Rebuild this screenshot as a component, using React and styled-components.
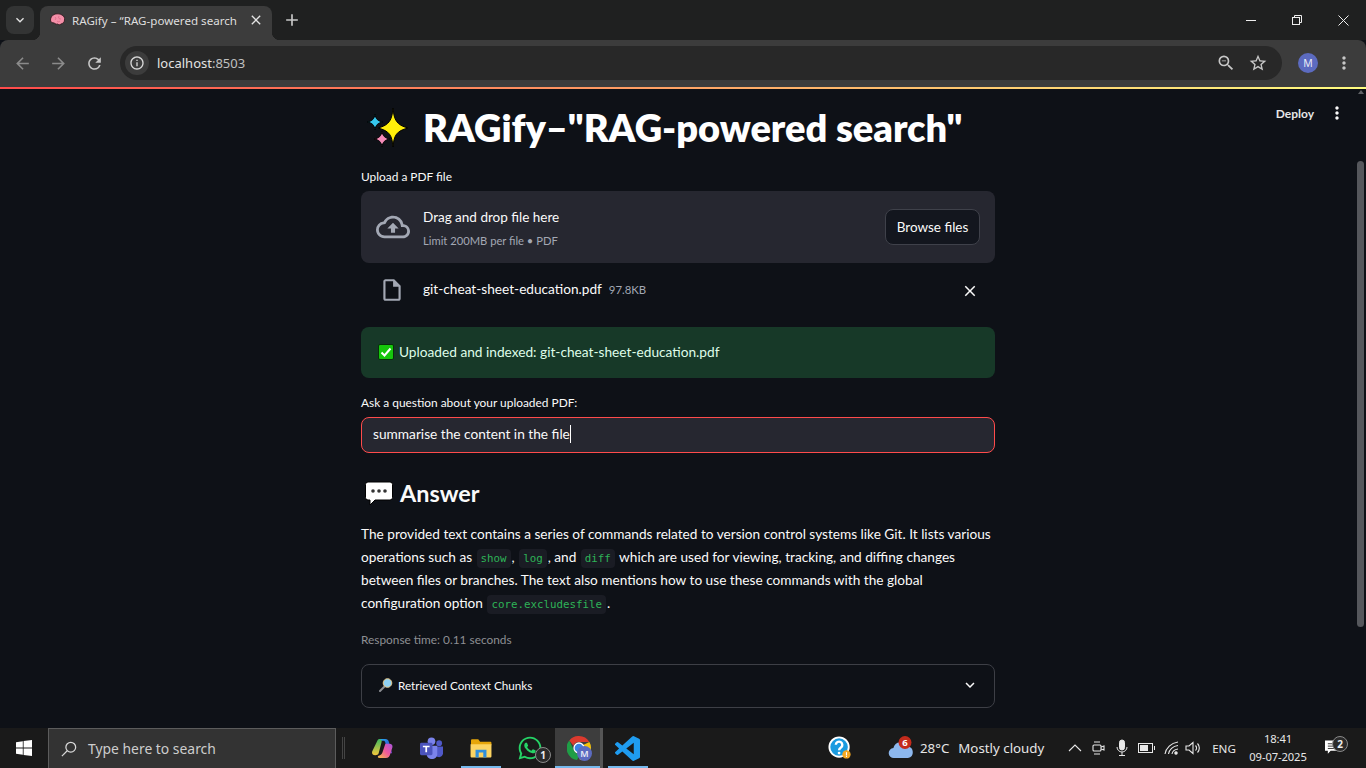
import React from "react";
import styled, { createGlobalStyle } from "styled-components";
import { MdOutlineCloudUpload, MdOutlineInsertDriveFile, MdClose, MdKeyboardArrowDown, MdMoreVert, MdArrowBack, MdArrowForward, MdRefresh, MdInfoOutline, MdAdd, MdStarBorder, MdOutlineZoomOut } from "react-icons/md";
import { FaWhatsapp } from "react-icons/fa";

const Global = createGlobalStyle`
  html, body { margin: 0; padding: 0; height: 100%; overflow: hidden; background: #0e1117; }
  * { box-sizing: border-box; }
`;
const ui = `"Noto Sans", "Open Sans", sans-serif`;
const st = `Lato, "Noto Sans", sans-serif`;
const mono = `"DejaVu Sans Mono", "Liberation Mono", monospace`;

const Screen = styled.div`display:flex;flex-direction:column;width:1366px;height:768px;overflow:hidden;background:#0e1117;`;

/* browser chrome */
const TabBar = styled.div`display:flex;align-items:flex-end;height:40px;background:#1f2020;padding-left:6px;flex:none;`;
const TabList = styled.div`width:28px;height:28px;margin-bottom:6px;border-radius:8px;background:#333434;color:#e3e3e3;display:flex;align-items:center;justify-content:center;font-size:16px;`;
const Tab = styled.div`
  position:relative;display:flex;align-items:center;width:232px;height:34px;margin-left:6px;padding:0 8px 6px 10px;
  background:#3c3c3c;border-radius:8px 8px 0 0;color:#dedede;font:11.6px ${ui};
  &::after{content:"";position:absolute;right:-8px;bottom:0;width:8px;height:8px;background:radial-gradient(circle at 100% 0,transparent 8px,#3c3c3c 8.5px);}
  &::before{content:"";position:absolute;left:-8px;bottom:0;width:8px;height:8px;background:radial-gradient(circle at 0 0,transparent 8px,#3c3c3c 8.5px);}
`;
const TabTitle = styled.span`flex:1;margin-left:7px;white-space:nowrap;`;
const NewTab = styled.div`width:24px;height:24px;margin:0 0 8px 8px;color:#c7c7c7;font-size:20px;display:flex;align-items:center;justify-content:center;`;
const WindowControls = styled.div`margin-left:auto;display:flex;height:40px;`;
const WinBtn = styled.div`width:46px;height:40px;display:flex;align-items:center;justify-content:center;`;

const ToolBar = styled.div`display:flex;align-items:center;height:47px;background:#3c3c3c;border-radius:8px 8px 0 0;flex:none;padding:0 0 1px 4px;`;
const NavBtn = styled.div`width:36px;height:34px;display:flex;align-items:center;justify-content:center;font-size:19px;color:${p=>p.$off?"#8b8b8b":"#c7c7c7"};`;
const Omnibox = styled.div`display:flex;align-items:center;width:1162px;height:34px;margin-left:8px;padding:0 8px 0 5px;border-radius:17px;background:#282828;`;
const SiteInfo = styled.div`width:24px;height:24px;border-radius:12px;background:#3c3c3c;color:#d8d8d8;display:flex;align-items:center;justify-content:center;font-size:16px;`;
const Url = styled.div`margin-left:8px;font:13px ${ui};color:#e3e3e3;flex:1;span{color:#c0c0c0;}`;
const OmniIcon = styled.div`width:32px;display:flex;justify-content:center;color:#c7c7c7;font-size:20px;`;
const Avatar = styled.div`width:20px;height:20px;border-radius:50%;background:#5c6bc0;color:#e8eaf6;font:10.5px ${ui};display:flex;align-items:center;justify-content:center;margin-left:16px;`;
const Kebab = styled.div`margin-left:16px;color:#c7c7c7;font-size:20px;display:flex;`;
const Decoration = styled.div`height:2px;flex:none;background:linear-gradient(90deg,#ff4b4b,#fffd80);`;

/* streamlit page */
const Page = styled.div`position:relative;flex:1;display:flex;min-height:0;overflow:hidden;font-family:${st};color:#fafafa;`;
const Content = styled.div`flex:1;display:flex;justify-content:center;`;
const Column = styled.main`width:634px;display:flex;flex-direction:column;padding-top:14px;`;
const Scrollbar = styled.div`width:10px;flex:none;padding:72px 2px 0 1px;position:relative;`;
const Thumb = styled.div`height:466px;background:#55575c;border-radius:4px;`;
const ScrollUp = styled.div`position:absolute;top:1px;left:2px;border:3px solid transparent;border-bottom:4px solid #5f6165;border-top:0;`;
const Header = styled.div`position:absolute;top:14px;right:19px;display:flex;align-items:center;gap:13px;font:700 12px ${st};color:#e6e6e6;`;
const Dots = styled.div`display:flex;font-size:20px;color:#fafafa;`;

const Title = styled.h1`margin:0;display:flex;align-items:center;height:50px;padding:0 0 0 4px;font:800 38px/48px ${st};color:#fff;white-space:nowrap;`;
const TitleText = styled.span`margin:0 0 2px 12px;letter-spacing:-.04px;`;
const Label = styled.div`margin-top:${p=>p.$mt}px;font:11.9px/16px ${st};color:#fafafa;`;
const Dropzone = styled.div`display:flex;align-items:center;height:72px;margin-top:6px;padding:0 15px;border-radius:8px;background:#262730;`;
const DropIcon = styled.div`display:flex;color:#a3a8b4;font-size:34px;width:47px;`;
const DropText = styled.div`flex:1;display:flex;flex-direction:column;gap:7px;padding-top:2px;`;
const DropTitle = styled.div`font:13.5px/18px ${st};color:#fafafa;`;
const DropSub = styled.div`font:11.2px/16px ${st};color:#a3a8b4;`;
const BrowseBtn = styled.button`width:95px;height:36px;background:#13161e;border:1px solid #3f414a;border-radius:8px;color:#fafafa;font:13.5px ${st};padding:0;`;
const FileRow = styled.div`display:flex;align-items:center;height:52px;padding:0 16px 0 18px;margin-bottom:12px;`;
const FileIcon = styled.div`display:flex;color:#a3a8b4;font-size:26px;width:44px;margin-top:2px;`;
const FileName = styled.span`font:13.65px ${st};color:#fafafa;`;
const FileSize = styled.span`font:11.4px ${st};color:#a3a8b4;margin-left:7px;`;
const Remove = styled.div`margin-left:auto;display:flex;font-size:18px;color:#fafafa;margin-top:3px;`;
const Alert = styled.div`display:flex;align-items:center;gap:5px;height:51px;padding:0 0 2px 17px;border-radius:8px;background:#173928;color:#dffde9;font:13.7px ${st};`;
const Field = styled.div`display:flex;align-items:center;height:36px;margin-top:6px;padding:0 0 3px 11px;border:1px solid #ff4b4b;border-radius:8px;background:#262730;font:13.7px ${st};color:#fafafa;`;
const Caret = styled.span`display:inline-block;width:1px;height:18px;background:#fff;`;
const H3 = styled.h3`margin:21px 0 0;display:flex;align-items:center;gap:7px;height:38px;padding-left:4px;font:700 23.400px/38px ${st};color:#fafafa;`;
const Body = styled.p`margin:11px 0 0;font:13.65px/23px ${st};color:#fafafa;white-space:nowrap;`;
const Code = styled.code`font:10.8px ${mono};color:#2eb357;background:#1a1c24;border-radius:4px;padding:3px 4px;margin:0 1px;`;
const Caption = styled.div`margin-top:17px;font:11.85px/16px ${st};color:#8d8f93;`;
const Expander = styled.div`display:flex;align-items:center;height:44px;margin-top:16px;padding:0 15px 2px 17px;border:1px solid #3d3f46;border-radius:8px;font:11.700px ${st};color:#fafafa;gap:5px;`;
const Chevron = styled.div`margin-left:auto;display:flex;font-size:18px;`;

/* taskbar */
const Taskbar = styled.div`display:flex;align-items:stretch;height:40px;flex:none;background:#1a1a1a;font-family:${ui};color:#e8e8e8;`;
const Start = styled.div`width:48px;display:flex;align-items:center;justify-content:center;`;
const Search = styled.div`width:288px;display:flex;align-items:center;padding-left:12px;gap:11px;background:#333;border:1px solid #5c5c5c;border-bottom:0;font-size:13.900px;color:#cdcdcd;`;
const Grip = styled.div`width:3px;height:22px;margin:9px 13px 0 6px;border-left:1px solid #444;border-right:1px solid #444;`;
const Slot = styled.div`
  position:relative;width:${p=>p.$w||49}px;display:flex;align-items:center;justify-content:center;
  background:${p=>p.$active?"linear-gradient(90deg,transparent 1px,#3d3d3d 1px,#3d3d3d 46px,#555 46px)":"transparent"};
  &::after{content:"";position:absolute;left:${p=>p.$active?1:5}px;right:${p=>p.$active?3:4}px;bottom:0;height:2px;background:${p=>p.$line?"#76b9ed":"transparent"};}
`;
const Count = styled.span`
  position:absolute;right:${p=>p.$r}px;bottom:${p=>p.$b}px;width:16px;height:16px;border-radius:50%;
  background:#2a2a2a;border:1px solid #8a8a8a;color:#ededed;font:700 10px/14px ${ui};text-align:center;
`;
const ProfileBadge = styled.span`
  position:absolute;right:11px;bottom:7px;width:15px;height:15px;border-radius:50%;
  background:#5c6bc0;color:#e8eaf6;font:600 9px/15px ${ui};text-align:center;
`;
const Tray = styled.div`display:flex;align-items:center;margin-left:164px;`;
const Weather = styled.div`display:flex;align-items:center;font-size:13.300px;color:#e6e6e6;width:198px;padding-left:24px;gap:6px;white-space:nowrap;`;
const Cond = styled.span`margin-left:3px;`;
const TrayIcon = styled.div`width:${p=>p.$w}px;display:flex;justify-content:center;color:#e8e8e8;`;
const Lang = styled.div`width:40px;margin-left:2px;text-align:center;font-size:11.600px;color:#e8e8e8;`;
const Clock = styled.div`width:68px;text-align:center;font-size:11.200px;line-height:18px;color:#e8e8e8;letter-spacing:-.1px;`;
const Notif = styled.div`position:relative;width:32px;margin-left:5px;display:flex;justify-content:center;`;

const Sparkles = () => (
  <svg width="46" height="46" viewBox="0 0 46 46">
    <g stroke="#000" strokeWidth="1" strokeLinejoin="round">
      <path fill="#ffef0a" d="M28 3 C29 15 31.500 20 43 23 C31.500 26 29 30 28 42 C27 30 24.500 26 13 23 C24.500 20 27 15 28 3Z"/>
      <path fill="#35c8ee" d="M10 9 C10.800 14 12.500 16 18 17 C12.500 18 10.800 20 10 25 C9.200 20 7.500 18 2 17 C7.500 16 9.200 14 10 9Z"/>
      <path fill="#f48cb8" d="M17 26 C17.800 31 19.500 33 25 34 C19.500 35 17.800 37 17 42 C16.200 37 14.500 35 9 34 C14.500 33 16.200 31 17 26Z"/>
    </g>
  </svg>
);
const Brain = () => (
  <svg width="15" height="15" viewBox="0 0 15 15">
    <path fill="#f48fa8" stroke="#2a1216" strokeWidth=".8" d="M.5 7c0-3 2-4.500 3.500-5.500 2-1 6-1 8 .5 2 1 3 3 2.500 5 0 2-1.500 3.500-3.500 4-1 1-2.500 1-3 0-2 .5-3-.2-3.500-1C2 10 .5 9 .5 7z"/>
    <path fill="none" stroke="#d9627f" strokeWidth=".7" d="M5 4c1 1 1 2 0 3M9 3c-1 2 0 3 2 3M7 8c1 1 2 1 3 0"/>
  </svg>
);
const Check = () => (
  <svg width="16" height="16" viewBox="0 0 16 16">
    <rect x=".5" y=".5" width="15" height="15" rx="1.500" fill="#16c60c" stroke="#07310a"/>
    <path d="M3.500 8.500 6.500 11.500 12.500 4.500" fill="none" stroke="#fff" strokeWidth="2"/>
  </svg>
);
const Bubble = () => (
  <svg width="28" height="25" viewBox="0 0 28 25">
    <path fill="#fff" stroke="#000" d="M3 1h22a2.500 2.500 0 0 1 2.500 2.500v13a2.500 2.500 0 0 1-2.500 2.500H10l-5 5v-5H3A2.500 2.500 0 0 1 .5 16.500v-13A2.500 2.500 0 0 1 3 1z"/>
    <circle cx="8" cy="10" r="1.800" fill="#333"/><circle cx="14" cy="10" r="1.800" fill="#333"/><circle cx="20" cy="10" r="1.800" fill="#333"/>
  </svg>
);
const Magnifier = () => (
  <svg width="14" height="14" viewBox="0 0 14 14">
    <path d="M1 13 6 8" stroke="#8b8d92" strokeWidth="2" strokeLinecap="round"/>
    <circle cx="8.500" cy="5" r="4.300" fill="#8fd0f2" stroke="#e8c98c" strokeWidth="1"/>
  </svg>
);
const WinLogo = () => (
  <svg width="16" height="16" viewBox="0 0 16 16"><path fill="#fff" d="M0 2.200 6.800 1.200v6.300H0zM7.600 1.100 16 0v7.500H7.600zM0 8.400h6.800v6.400L0 13.800zM7.600 8.400H16V16l-8.400-1.100z"/></svg>
);
const SearchGlass = () => (
  <svg width="16" height="16" viewBox="0 0 18 18" fill="none" stroke="#d8d8d8" strokeWidth="1.400"><circle cx="11" cy="7" r="5.500"/><path d="M7 11 1 17"/></svg>
);
const Copilot = () => (
  <svg width="23" height="23" viewBox="0 0 24 24">
    <defs>
      <linearGradient id="cpA" x1="0" y1="0" x2="1" y2="1"><stop offset="0" stopColor="#27b4f0"/><stop offset=".55" stopColor="#2b62d9"/><stop offset="1" stopColor="#7b3fc8"/></linearGradient>
      <linearGradient id="cpB" x1="0" y1="1" x2="1" y2="0"><stop offset="0" stopColor="#f6c445"/><stop offset=".5" stopColor="#f0589a"/><stop offset="1" stopColor="#a855e0"/></linearGradient>
      <linearGradient id="cpC" x1="0" y1="0" x2="0" y2="1"><stop offset="0" stopColor="#3fb95d"/><stop offset="1" stopColor="#f4c73c"/></linearGradient>
    </defs>
    <path fill="url(#cpA)" d="M8 2h7c2 0 3 1 3.600 3L22 17h-4L15 6c-.4-1.300-1-2-2-2H9z"/>
    <path fill="url(#cpC)" d="M7 3c1-1 2-1 3-.5 1 .5 1.500 1.500 1 3L8 17c-.5 1.500-2 2-3.500 2-2.500 0-4-1.500-3.300-4z"/>
    <path fill="url(#cpB)" d="M15 7h4c2.500 0 4 1.500 3.300 4l-2.300 7c-.6 2-1.800 4-4.500 4H9c-2 0-2.500-2-1-2.500 2-.5 3.500-1.500 4-3.500z"/>
  </svg>
);
const Teams = () => (
  <svg width="25" height="23" viewBox="0 0 26 24">
    <circle cx="13" cy="4.500" r="4" fill="#7b83eb"/><circle cx="21" cy="6.500" r="3" fill="#5059c9"/>
    <path fill="#5059c9" d="M17 10h8v7c0 2.500-2 4-4 4-1.500 0-3-.6-4-2z"/>
    <path fill="#7b83eb" d="M8 9h11v9c0 3-2.500 5-5.500 5S8 21 8 18z"/>
    <rect x="1" y="6" width="13" height="13" rx="1.500" fill="#4b53bc"/>
    <path fill="#fff" d="M4 9h7v1.800H8.400V16H6.600v-5.200H4z"/>
  </svg>
);
const Folder = () => (
  <svg width="22" height="20" viewBox="0 0 24 22">
    <path fill="#e5a50a" d="M1 3c0-1 .5-1.500 1.500-1.500H9L11 4h11c1 0 1.500.5 1.500 1.500V8H1z"/>
    <path fill="#fcd462" d="M.5 7h23v13c0 1-.5 1.500-1.500 1.500H2C1 21.500.5 21 .5 20z"/>
    <path fill="#2f8fdc" d="M6 13h12v8.500h-3.500V16h-5v5.500H6z"/>
  </svg>
);
const Chrome = () => (
  <svg width="24" height="24" viewBox="0 0 24 24">
    <path fill="#db3a2e" d="M12 0a12 12 0 0 1 10.400 6H12a6 6 0 0 0-5.600 3.700L2.300 4.500A12 12 0 0 1 12 0z"/>
    <path fill="#f4c20d" d="M22.400 6A12 12 0 0 1 12.500 24l4.700-9a6 6 0 0 0-1-6z"/>
    <path fill="#1f9d46" d="M2.300 4.500 6.800 14a6 6 0 0 0 6.500 3.800L10 24A12 12 0 0 1 2.300 4.500z"/>
    <circle cx="12" cy="12" r="5" fill="#3b82e6" stroke="#fff" strokeWidth="1.300"/>
  </svg>
);
const VSCode = () => (
  <svg width="25" height="25" viewBox="0 0 24 24"><path fill="#1f9cf0" d="M23.150 2.587L18.210.21a1.494 1.494 0 0 0-1.705.29l-9.460 8.630-4.120-3.128a.999.999 0 0 0-1.276.057L.327 7.261A1 1 0 0 0 .326 8.740L3.899 12 .326 15.260a1 1 0 0 0 .001 1.479L1.650 17.940a.999.999 0 0 0 1.276.057l4.120-3.128 9.460 8.630a1.492 1.492 0 0 0 1.704.29l4.942-2.377A1.500 1.500 0 0 0 24 20.060V3.939a1.500 1.500 0 0 0-.85-1.352zm-5.146 14.861L10.826 12l7.178-5.448v10.896z"/></svg>
);
const HelpIcon = () => (
  <svg width="24" height="24" viewBox="0 0 26 26">
    <circle cx="12" cy="12" r="10.500" fill="#1a9be0" stroke="#fff" strokeWidth="2"/>
    <path d="M8.500 9.500a3.500 3.500 0 1 1 5.500 3c-1.300.9-2 1.400-2 3" fill="none" stroke="#fff" strokeWidth="2.600"/>
    <circle cx="12" cy="18.500" r="1.500" fill="#fff"/>
    <circle cx="20" cy="20" r="4.500" fill="#f6a821"/><rect x="19.400" y="17.500" width="1.200" height="3.500" fill="#fff"/><rect x="19.400" y="21.500" width="1.200" height="1.200" fill="#fff"/>
  </svg>
);
const Cloud = () => (
  <svg width="26" height="24" viewBox="0 0 26 24">
    <path fill="#8db8ee" d="M6 22a5 5 0 0 1-.6-10 7.500 7.500 0 0 1 14-1.500A5.800 5.800 0 0 1 20 22z"/>
    <circle cx="17" cy="6.500" r="6.500" fill="#c42b1c"/>
    <text x="17" y="10" textAnchor="middle" fontSize="9.500" fontWeight="700" fill="#fff" fontFamily="Noto Sans, sans-serif">6</text>
  </svg>
);
const s = {fill:"none",stroke:"#e8e8e8",strokeWidth:1.100};

export default function App() {
  return (
    <Screen>
      <Global />
      <TabBar>
        <TabList><MdKeyboardArrowDown /></TabList>
        <Tab><Brain /><TabTitle>RAGify – “RAG-powered search</TabTitle><MdClose size={16} color="#e3e3e3" /></Tab>
        <NewTab><MdAdd /></NewTab>
        <WindowControls>
          <WinBtn><svg width="10" height="10" viewBox="0 0 10 10"><path d="M0 5.500h10" stroke="#eee"/></svg></WinBtn>
          <WinBtn><svg width="10" height="10" viewBox="0 0 10 10" fill="none" stroke="#eee"><rect x=".5" y="2.500" width="7" height="7"/><path d="M2.500 2.500V.5h7v7H7.500"/></svg></WinBtn>
          <WinBtn><svg width="11" height="11" viewBox="0 0 11 11" stroke="#eee"><path d="M.5.500l10 10M10.500.5l-10 10"/></svg></WinBtn>
        </WindowControls>
      </TabBar>
      <ToolBar>
        <NavBtn $off><MdArrowBack /></NavBtn>
        <NavBtn $off><MdArrowForward /></NavBtn>
        <NavBtn><MdRefresh /></NavBtn>
        <Omnibox>
          <SiteInfo><MdInfoOutline /></SiteInfo>
          <Url>localhost<span>:8503</span></Url>
          <OmniIcon><MdOutlineZoomOut /></OmniIcon>
          <OmniIcon><MdStarBorder /></OmniIcon>
        </Omnibox>
        <Avatar>M</Avatar>
        <Kebab><MdMoreVert /></Kebab>
      </ToolBar>
      <Decoration />
      <Page>
        <Content>
          <Column>
            <Title><Sparkles /><TitleText>RAGify–"RAG-powered search"</TitleText></Title>
            <Label $mt={16}>Upload a PDF file</Label>
            <Dropzone>
              <DropIcon><MdOutlineCloudUpload /></DropIcon>
              <DropText>
                <DropTitle>Drag and drop file here</DropTitle>
                <DropSub>Limit 200MB per file • PDF</DropSub>
              </DropText>
              <BrowseBtn>Browse files</BrowseBtn>
            </Dropzone>
            <FileRow>
              <FileIcon><MdOutlineInsertDriveFile /></FileIcon>
              <FileName>git-cheat-sheet-education.pdf</FileName>
              <FileSize>97.8KB</FileSize>
              <Remove><MdClose /></Remove>
            </FileRow>
            <Alert><Check />Uploaded and indexed: git-cheat-sheet-education.pdf</Alert>
            <Label $mt={17}>Ask a question about your uploaded PDF:</Label>
            <Field>summarise the content in the file<Caret /></Field>
            <H3><Bubble />Answer</H3>
            <Body>
              The provided text contains a series of commands related to version control systems like Git. It lists various<br />
              operations such as <Code>show</Code>, <Code>log</Code>, and <Code>diff</Code> which are used for viewing, tracking, and diffing changes<br />
              between files or branches. The text also mentions how to use these commands with the global<br />
              configuration option <Code>core.excludesfile</Code>.
            </Body>
            <Caption>Response time: 0.11 seconds</Caption>
            <Expander><Magnifier />Retrieved Context Chunks<Chevron><MdKeyboardArrowDown /></Chevron></Expander>
          </Column>
        </Content>
        <Scrollbar><ScrollUp /><Thumb /></Scrollbar>
        <Header>Deploy<Dots><MdMoreVert /></Dots></Header>
      </Page>
      <Taskbar>
        <Start><WinLogo /></Start>
        <Search><SearchGlass />Type here to search</Search>
        <Grip />
        <Slot><Copilot /></Slot>
        <Slot><Teams /></Slot>
        <Slot $line><Folder /></Slot>
        <Slot><FaWhatsapp size={26} color="#25d366" /><Count $r={3} $b={5}>1</Count></Slot>
        <Slot $line $active><Chrome /><ProfileBadge>M</ProfileBadge></Slot>
        <Slot $line><VSCode /></Slot>
        <Tray>
          <Slot $w={48}><HelpIcon /></Slot>
          <Weather><Cloud />28°C<Cond>Mostly cloudy</Cond></Weather>
          <TrayIcon $w={26}><svg width="14" height="14" viewBox="0 0 14 14" {...s}><path d="M1 10l6-6 6 6"/></svg></TrayIcon>
          <TrayIcon $w={22}><svg width="16" height="16" viewBox="0 0 16 16" {...s}><rect x="2" y="5" width="8" height="6" rx="1"/><path d="M10 7l3-1v4l-3-1M3 2h6M3 14h6"/></svg></TrayIcon>
          <TrayIcon $w={24}><svg width="16" height="18" viewBox="0 0 16 18" fill="#e8e8e8" stroke="#e8e8e8"><rect x="5.500" y="1" width="5" height="10" rx="2.500"/><path fill="none" d="M3 8a5 5 0 0 0 10 0M8 13v3M5 16.500h6"/></svg></TrayIcon>
          <TrayIcon $w={26}><svg width="18" height="12" viewBox="0 0 18 12" fill="none" stroke="#e8e8e8"><rect x=".5" y="1.500" width="14" height="9"/><rect x="2" y="3" width="8" height="6" fill="#e8e8e8" stroke="none"/><path d="M16.500 4v4"/></svg></TrayIcon>
          <TrayIcon $w={24}><svg width="16" height="14" viewBox="0 0 16 14" {...s}><path d="M1 13C2 7 7 2 14 1M4.500 13C5 9 9 5 14 4.500M8 13c.3-2 2.500-4.500 6-5"/><circle cx="12" cy="12" r="1.200" fill="#e8e8e8"/></svg></TrayIcon>
          <TrayIcon $w={18}><svg width="16" height="16" viewBox="0 0 16 16" {...s}><path d="M1 6v4h3l4 3.500V2.500L4 6zM10.500 5.500a3.500 3.500 0 0 1 0 5M12.500 3.500a6.500 6.500 0 0 1 0 9"/></svg></TrayIcon>
          <Lang>ENG</Lang>
          <Clock>18:41<br />09-07-2025</Clock>
          <Notif>
            <svg width="17" height="16" viewBox="0 0 18 16"><path fill="#fff" d="M0 0h16v11H6l-3 3v-3H0z"/><path stroke="#333" d="M3 3.500h10M3 6h10M3 8.500h7"/></svg>
            <Count $r={1} $b={4}>2</Count>
          </Notif>
        </Tray>
      </Taskbar>
    </Screen>
  );
}
